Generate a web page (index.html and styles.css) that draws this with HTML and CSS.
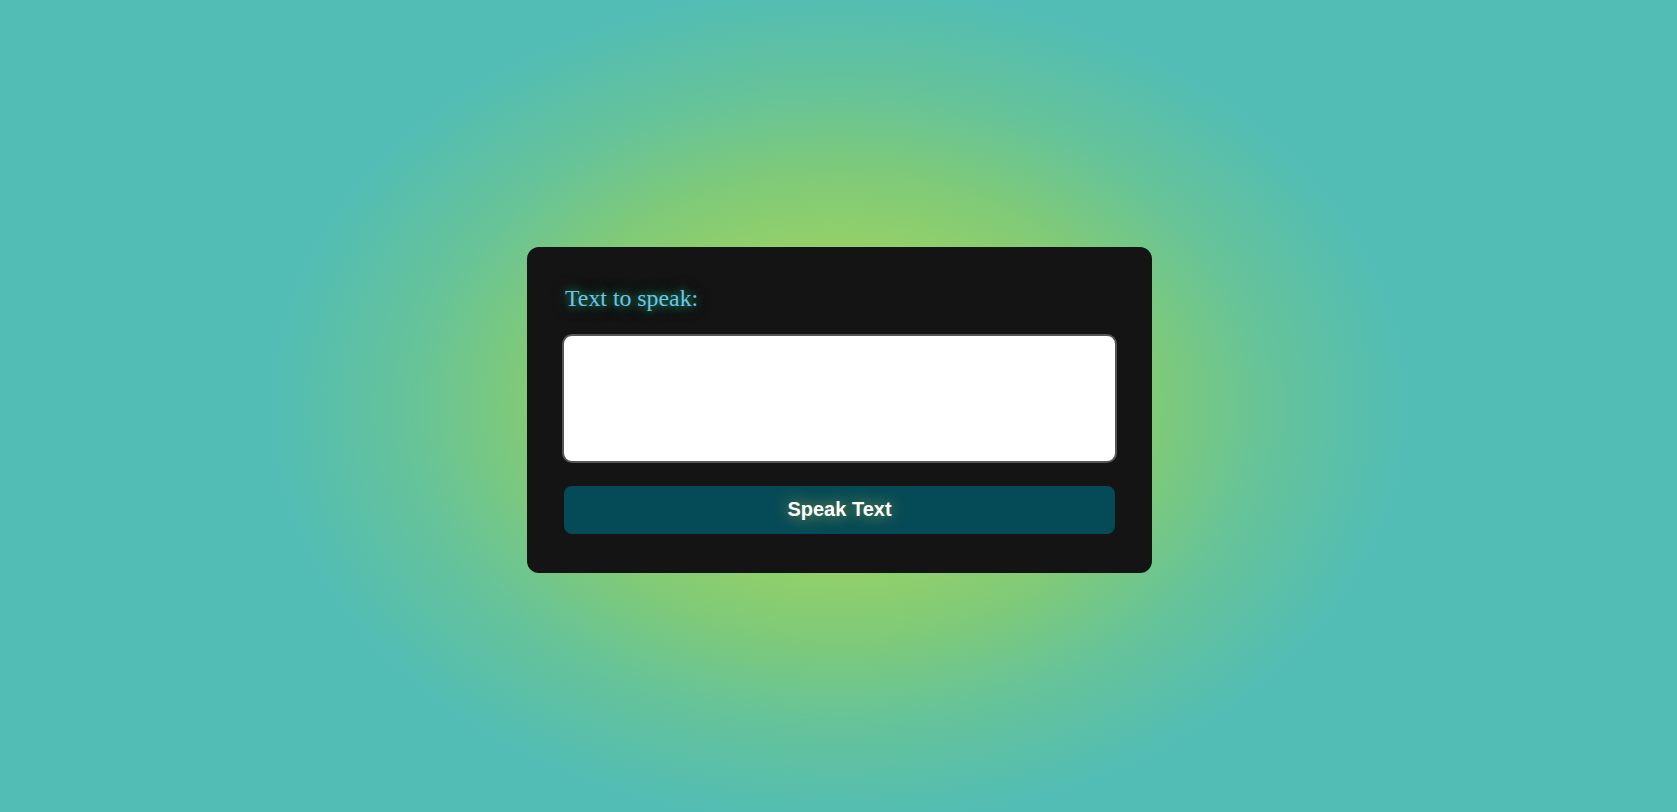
FILE: index.html
```html
<!DOCTYPE html>
<html lang="en">
<head>
<meta charset="utf-8">
<title>Text to Speech</title>
<link rel="stylesheet" href="styles.css">
</head>
<body>
<main class="page">
  <section class="card">
    <label class="label" for="text">Text to speak:</label>
    <textarea id="text" class="input"></textarea>
    <button class="btn" type="button">Speak Text</button>
  </section>
</main>
</body>
</html>
```
FILE: styles.css
```css
html, body {
  margin: 0;
  padding: 0;
  height: 100%;
}
body {
  background: radial-gradient(ellipse 570px 420px at 50% 50%,
    #a2d660 0%, #93d069 38%, #80ca78 55%, #66c399 75%, #52bdb5 100%) #50bdb8;
  background-color: #50bdb8;
}
.page {
  height: 812px;
  box-sizing: border-box;
  padding-top: 7px;
  padding-left: 2px;
  display: flex;
  align-items: center;
  justify-content: center;
}
.card {
  width: 625px;
  box-sizing: border-box;
  background: #141414;
  border-radius: 12px;
  padding: 38px 35px 39px;
  display: flex;
  flex-direction: column;
}
.label {
  font-family: "Liberation Serif", "Times New Roman", serif;
  font-size: 23.8px;
  line-height: 26px;
  color: #6fc3ea;
  text-shadow: 0 0 8px rgba(30, 170, 120, 0.85), 0 0 16px rgba(30, 160, 120, 0.5);
  margin: 0 0 23px 3px;
}
.input {
  display: block;
  width: 100%;
  height: 129px;
  box-sizing: border-box;
  margin: 0;
  border: 2px solid #555;
  border-radius: 10px;
  background: #fff;
  resize: none;
  outline: none;
  padding: 8px;
}
.btn {
  display: block;
  height: 48px;
  margin: 23px 2px 0 2px;
  border: none;
  border-radius: 8px;
  background: #054a57;
  color: #fff;
  font-family: "Liberation Sans", Arial, sans-serif;
  font-weight: bold;
  font-size: 20px;
  text-shadow: 0 0 16px rgba(210, 200, 70, 0.75);
  cursor: pointer;
}
```
